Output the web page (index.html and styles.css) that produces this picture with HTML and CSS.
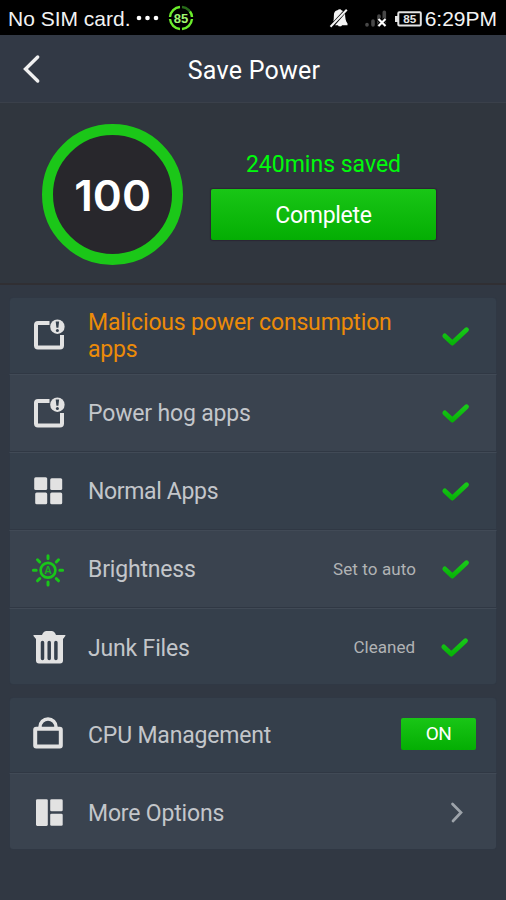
FILE: index.html
```html
<!DOCTYPE html>
<html lang="en">
<head>
<meta charset="utf-8">
<title>Save Power</title>
<link rel="stylesheet" href="styles.css">
</head>
<body>
<svg class="defs" width="0" height="0" aria-hidden="true">
  <defs>
    <linearGradient id="green" x1="0" y1="0" x2="0" y2="1"><stop offset="0" stop-color="#18c818"/><stop offset="1" stop-color="#08b408"/></linearGradient>
    <symbol id="check" viewBox="0 0 30 22"><path d="M4.800 10.900 12.300 18.100 26.500 4.700" fill="none" stroke="url(#green)" stroke-width="4.800" stroke-linecap="round" stroke-linejoin="round"/></symbol>
    <symbol id="alert" viewBox="0 0 38 38">
      <path d="M20.500 7H9a2 2 0 0 0-2 2v20.500a2 2 0 0 0 2 2h22a2 2 0 0 0 2-2V19" fill="none" stroke="#e2e2e2" stroke-width="4"/>
      <circle cx="28.400" cy="10.700" r="7.200" fill="#e2e2e2"/>
      <path d="M26.700 5.500h3.400l-.7 6.200h-2z" fill="#34404d"/><circle cx="28.400" cy="14.500" r="1.500" fill="#34404d"/>
    </symbol>
  </defs>
</svg>
<header class="status">
  <span class="carrier">No SIM card.</span>
  <svg class="dots" width="24" height="6"><g fill="#fff"><circle cx="3" cy="3" r="2.300"/><circle cx="11.500" cy="3" r="2.300"/><circle cx="20" cy="3" r="2.300"/></g></svg>
  <svg class="meter" width="26" height="26" viewBox="0 0 26 26">
    <g fill="none" stroke="#6bed2b" stroke-width="2.400">
      <path d="M14 2A11 11 0 0 1 24 12" stroke="#286b19"/>
      <path d="M24 14A11 11 0 0 1 14 24M12 24A11 11 0 0 1 2 14M2 12A11 11 0 0 1 12 2"/>
      <path d="M22 6.500A11 11 0 0 1 24 12"/>
    </g>
    <text x="13" y="17.500" text-anchor="middle" font-size="13" class="bold" fill="#a0f870">85</text>
  </svg>
  <svg class="bell" width="20" height="20" viewBox="0 0 20 20">
    <path d="M5 6C5.500 3 7.500 2.500 8.500 2.300 9.500.8 12 .8 12.500 2.300L14 3 4.300 13.500C5 11 4.700 8.500 5 6z" fill="#f4f4f4"/>
    <path d="M16 5.800c.2 4 .5 7.200 2.500 9.700v1.700H13c-.5 1.600-3.500 1.600-4 0H6z" fill="#f4f4f4"/>
    <path d="M17.800 1.800 1.500 18.800" stroke="#f4f4f4" stroke-width="2"/>
  </svg>
  <svg class="signal" width="22" height="18" viewBox="0 0 22 18">
    <g stroke="#484848" stroke-width="3.600" stroke-linecap="round"><path d="M2 15v-.5M8 15v-4M14 15V6M19.300 15V2.300"/></g>
    <path d="m13.500 9 7 7m0-7-7 7" stroke="#000" stroke-width="4"/><path d="m13.500 9 7 7m0-7-7 7" stroke="#fff" stroke-width="2.200"/>
  </svg>
  <svg class="battery" width="27" height="16" viewBox="0 0 27 16">
    <path d="M0 5h3v6H0z" fill="#e4e4e4"/><rect x="3.300" y="1.300" width="22.500" height="13.200" rx="1" fill="none" stroke="#e4e4e4" stroke-width="2"/>
    <text x="14.700" y="11.600" text-anchor="middle" font-size="10" textLength="13" lengthAdjust="spacingAndGlyphs" class="bold" fill="#e4e4e4">85</text>
  </svg>
  <time>6:29PM</time>
</header>
<nav class="titlebar">
  <svg class="back" width="18" height="30" viewBox="0 0 18 30"><path d="M14.700 3 2.500 15l12.200 12" fill="none" stroke="#f0f0f0" stroke-width="3.400" stroke-linecap="round"/></svg>
  <h1>Save Power</h1>
</nav>
<section class="hero">
  <div class="score"><span>100</span></div>
  <div class="summary">
    <p class="saved">240mins saved</p>
    <button class="complete">Complete</button>
  </div>
</section>
<main>
  <ul class="card">
    <li class="row end">
      <svg class="icon raised"><use href="#alert"/></svg>
      <span class="label warning">Malicious power consumption apps</span>
      <svg class="check"><use href="#check"/></svg>
    </li>
    <li class="row alt">
      <svg class="icon"><use href="#alert"/></svg>
      <span class="label">Power hog apps</span>
      <svg class="check"><use href="#check"/></svg>
    </li>
    <li class="row">
      <svg class="icon" viewBox="0 0 38 38" fill="#e2e2e2"><rect x="5.200" y="5.300" width="13" height="12.700" rx="1.500"/><rect x="21.200" y="6.300" width="12" height="11.700" rx="1.500"/><rect x="6.200" y="20.500" width="12" height="11.700" rx="1.500"/><rect x="21.200" y="20.500" width="12" height="11.700" rx="1.500"/></svg>
      <span class="label normal">Normal Apps</span>
      <svg class="check"><use href="#check"/></svg>
    </li>
    <li class="row alt">
      <svg class="icon" viewBox="0 0 38 38">
        <g transform="translate(19 20.300)" fill="none" stroke="#19c619" stroke-width="3" stroke-linecap="round">
          <circle r="7.400" stroke-width="2.700"/>
          <path d="M0-11.800V-14.600M0 11.800V14.600M-11.800 0H-14.600M11.800 0H14.600M-8.300-8.300-10.500-10.500M8.300-8.300 10.500-10.500M-8.300 8.300-10.500 10.500M8.300 8.300 10.500 10.500"/>
        </g>
        <text x="19" y="24" text-anchor="middle" font-size="10.500" class="bold" fill="#17b020">A</text>
      </svg>
      <span class="label">Brightness</span>
      <span class="state auto">Set to auto</span>
      <svg class="check"><use href="#check"/></svg>
    </li>
    <li class="row end">
      <svg class="icon" viewBox="0 0 38 38">
        <path d="M5 7h8q1.500-4 4.500-4h5q3 0 4.500 4h9q.8 0 .3.900L34 11v21.500q0 3-3 3H10q-3 0-3-3V11L4.500 8Q4 7 5 7z" fill="#e2e2e2"/>
        <path d="M13.500 14.500v16M20.200 14.500v16M26.900 14.500v16" stroke="#35404d" stroke-width="3.500" stroke-linecap="round"/>
      </svg>
      <span class="label low">Junk Files</span>
      <span class="state">Cleaned</span>
      <svg class="check last"><use href="#check"/></svg>
    </li>
  </ul>
  <ul class="card options">
    <li class="row short">
      <svg class="icon raised" viewBox="0 0 38 38" fill="none" stroke="#e2e2e2" stroke-width="4"><rect x="6.200" y="13.700" width="25.600" height="17.800" rx="1"/><path d="M11 13.500V12a8 8 0 0 1 16 0v1.500" stroke-width="3.500"/></svg>
      <span class="label">CPU Management</span>
      <button class="toggle">ON</button>
    </li>
    <li class="row alt end">
      <svg class="icon" viewBox="0 0 38 38" fill="#e2e2e2"><rect x="7" y="6.300" width="11.800" height="26.600" rx="1.300"/><rect x="21.200" y="6.300" width="12.500" height="12" rx="1.300"/><rect x="21.200" y="20.800" width="12.500" height="12" rx="1.300"/></svg>
      <span class="label low">More Options</span>
      <svg class="chevron" width="16" height="24" viewBox="0 0 16 24"><path d="m3.500 4 8.500 8.500L4 21" fill="none" stroke="#9da3aa" stroke-width="2.700" stroke-linecap="round"/></svg>
    </li>
  </ul>
</main>
</body>
</html>
```
FILE: styles.css
```css
* { box-sizing: border-box; }
body {
  margin: 0;
  height: 900px;
  overflow: hidden;
  background: #313843;
  color: #fff;
  font-family: Roboto, sans-serif;
}
h1, p, ul { margin: 0; padding: 0; font-weight: 400; }
button { border: 0; padding: 0; color: #fff; font-family: inherit; }
svg { display: block; flex: none; }
.defs { position: absolute; }
.bold { font-family: "Liberation Sans", sans-serif; font-weight: 700; }

.status {
  height: 35px;
  display: flex;
  align-items: center;
  padding: 2px 9px 0 8px;
  background: #000;
  color: #f2f2f2;
  font: 21px "Liberation Sans", sans-serif;
}
.dots { margin-left: 5px; margin-bottom: 2px; }
.meter { margin-left: 8px; margin-bottom: 2px; }
.bell { margin-left: auto; margin-bottom: 2px; }
.signal { margin-left: 16px; }
.battery { margin: 0 3px 0 8px; }

.titlebar {
  height: 68px;
  display: grid;
  grid-template-columns: 1fr auto 1fr;
  align-items: center;
  border-bottom: 1px solid #3a404a;
  background: #323945;
}
.back { margin-left: 23px; }
h1 { font-size: 25px; letter-spacing: 0.25px; padding: 3px 0 0 2px; }

.hero {
  height: 182px;
  display: flex;
  align-items: center;
  gap: 28px;
  padding: 2px 70px 0 42px;
  border-bottom: 2px solid #302f33;
  background: #30363e;
}
.score {
  width: 141px;
  height: 141px;
  display: flex;
  align-items: center;
  justify-content: center;
  border: 11.500px solid #1bc718;
  border-radius: 50%;
  background: #28272c;
  font: 600 42px Inter, sans-serif;
}
.score span { transform: scaleX(1.05); padding-top: 3px; }
.summary { flex: 1; margin-top: 1px; text-align: center; }
.saved { color: #00fa0c; font-size: 23px; line-height: 30px; padding-top: 1px; margin-bottom: 9px; }
.complete {
  width: 225px;
  height: 51px;
  padding-top: 2px;
  border-radius: 2px;
  background: linear-gradient(#19c616, #04ae03);
  box-shadow: 0 0 1px 1px #2c2635;
  font-size: 23px;
  letter-spacing: -0.3px;
}
main { padding: 12px 9px 0; }
.card {
  list-style: none;
  border-radius: 4px;
  overflow: hidden;
}
.options { margin-top: 12px; }
.row {
  height: 78px;
  display: flex;
  align-items: center;
  padding: 0 26px 0 19px;
  background: #353f4b;
  border: 1px solid #303844;
  border-top-color: #414a56;
}
.row.alt { background: #3a434f; }
.row.end { height: 77px; }
.row.short { height: 76px; }
.row:first-child { border-top-color: #303844; border-radius: 4px 4px 0 0; }
.row:last-child { border-radius: 0 0 4px 4px; }
.icon { width: 38px; height: 38px; }
.raised { margin-bottom: 2px; }
.label {
  flex: 1;
  margin-left: 21px;
  color: #c3c6ca;
  font-size: 23px;
  line-height: 27px;
  letter-spacing: -0.17px;
}
.label.normal { letter-spacing: -0.35px; }
.label.low { padding-top: 3px; }
.warning { color: #ec8b08; }
.state { color: #b1b3b5; font-size: 17px; margin-right: 25px; }
.state.auto { letter-spacing: 0.1px; margin-right: 24px; }
.check { width: 30px; height: 22px; }
.check.last { margin: 1px 1px 0 -1px; }
.toggle {
  width: 75px;
  height: 32px;
  margin: 0 -6px 3px 0;
  border-radius: 2px;
  background: linear-gradient(#19c616, #04ae03);
  font-size: 19px;
  letter-spacing: -0.5px;
}
.chevron { margin-right: 5px; }
```
